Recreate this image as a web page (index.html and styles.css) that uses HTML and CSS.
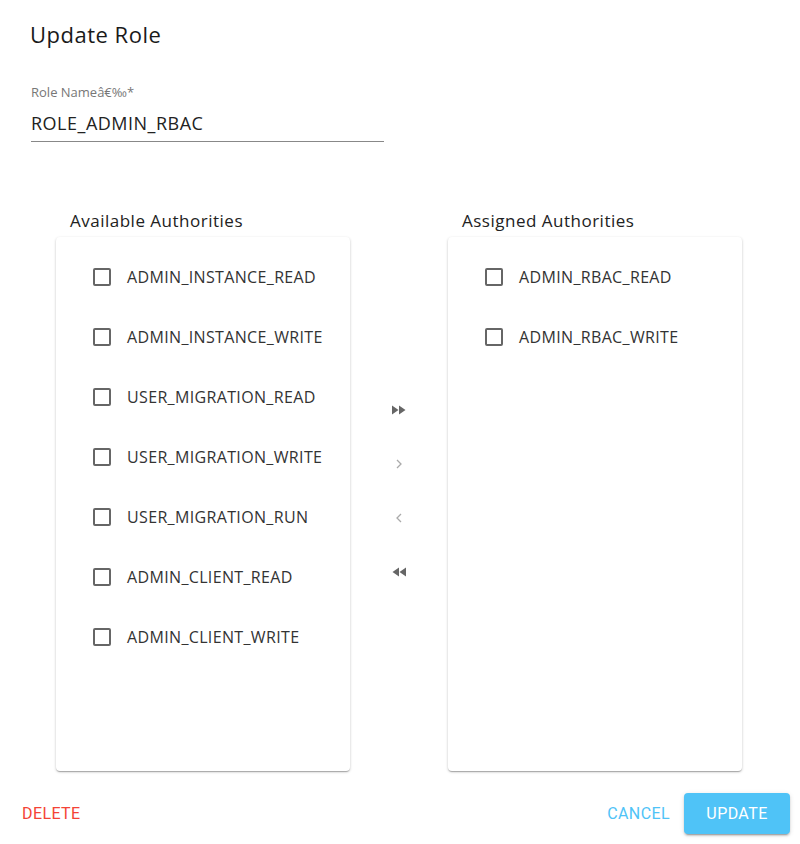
FILE: index.html
```html
<!DOCTYPE html>
<html>
<head>
<meta charset="utf-8">
<link rel="stylesheet" href="styles.css">
</head>
<body>
<div class="dialog">
  <h2 class="title">Update Role</h2>
  <div class="field">
    <label class="field-label">Role Nameâ€‰*</label>
    <div class="field-input">ROLE_ADMIN_RBAC</div>
  </div>
  <div class="transfer">
    <div class="column">
      <div class="col-title">Available Authorities</div>
      <div class="card">
        <div class="row"><span class="box"></span><span class="label">ADMIN_INSTANCE_READ</span></div>
        <div class="row"><span class="box"></span><span class="label">ADMIN_INSTANCE_WRITE</span></div>
        <div class="row"><span class="box"></span><span class="label">USER_MIGRATION_READ</span></div>
        <div class="row"><span class="box"></span><span class="label">USER_MIGRATION_WRITE</span></div>
        <div class="row"><span class="box"></span><span class="label">USER_MIGRATION_RUN</span></div>
        <div class="row"><span class="box"></span><span class="label">ADMIN_CLIENT_READ</span></div>
        <div class="row"><span class="box"></span><span class="label">ADMIN_CLIENT_WRITE</span></div>
      </div>
    </div>
    <div class="arrows">
      <button class="arrow dark"><svg width="16" height="12" viewBox="0 0 16 12"><path d="M1 1.5 L7.5 6 L1 10.5Z M8 1.5 L14.5 6 L8 10.5Z" fill="#666"/></svg></button>
      <button class="arrow"><svg width="10" height="12" viewBox="0 0 10 12"><path d="M3 2 L7 6 L3 10" fill="none" stroke="#aaa" stroke-width="1.3"/></svg></button>
      <button class="arrow"><svg width="10" height="12" viewBox="0 0 10 12"><path d="M7 2 L3 6 L7 10" fill="none" stroke="#aaa" stroke-width="1.3"/></svg></button>
      <button class="arrow dark"><svg width="16" height="12" viewBox="0 0 16 12"><path d="M15 1.5 L8.5 6 L15 10.5Z M8 1.5 L1.5 6 L8 10.5Z" fill="#666"/></svg></button>
    </div>
    <div class="column">
      <div class="col-title">Assigned Authorities</div>
      <div class="card">
        <div class="row"><span class="box"></span><span class="label">ADMIN_RBAC_READ</span></div>
        <div class="row"><span class="box"></span><span class="label">ADMIN_RBAC_WRITE</span></div>
      </div>
    </div>
  </div>
  <div class="actions">
    <button class="btn delete">DELETE</button>
    <div class="right">
      <button class="btn cancel">CANCEL</button>
      <button class="btn update">UPDATE</button>
    </div>
  </div>
</div>
</body>
</html>
```
FILE: styles.css
```css
* { box-sizing: border-box; }
body {
  margin: 0;
  background: #fff;
  font-family: "Open Sans", "Liberation Sans", sans-serif;
  color: #222;
}
.dialog {
  width: 800px;
  height: 844px;
  padding: 20px 0 0 0;
}
.title {
  margin: 0 0 0 30px;
  font-size: 22px;
  font-weight: 500;
  line-height: 28px;
  letter-spacing: 0.5px;
  color: #1a1a1a;
}
.field {
  margin: 36px 0 0 31px;
  width: 353px;
}
.field-label {
  display: block;
  font-size: 13px;
  color: #777;
  line-height: 16px;
}
.field-input {
  font-size: 18px;
  line-height: 24px;
  padding: 11px 0 6px 0;
  border-bottom: 1px solid #888;
  color: #222;
  letter-spacing: 0.5px;
}
.transfer {
  display: flex;
  margin: 67px 0 0 56px;
}
.column { width: 294px; }
.col-title {
  font-size: 17px;
  line-height: 24px;
  margin-left: 14px;
  margin-bottom: 4px;
  color: #222;
  letter-spacing: 0.5px;
}
.card {
  height: 534px;
  border-radius: 4px;
  box-shadow: 0 1px 3px rgba(0,0,0,0.2), 0 1px 1px rgba(0,0,0,0.14), 0 2px 1px -1px rgba(0,0,0,0.12);
  padding-top: 10px;
  background: #fff;
}
.row {
  display: flex;
  align-items: center;
  height: 60px;
  padding-left: 37px;
}
.box {
  width: 18px;
  height: 18px;
  border: 2px solid #666;
  border-radius: 2px;
  flex: none;
}
.label {
  margin-left: 16px;
  font-size: 16px;
  color: #333;
  letter-spacing: 0.35px;
}
.arrows {
  width: 98px;
  display: flex;
  flex-direction: column;
  align-items: center;
  padding-top: 189px;
  gap: 30px;
}
.arrow {
  width: 24px;
  height: 24px;
  border: 0;
  background: none;
  padding: 0;
  display: flex;
  align-items: center;
  justify-content: center;
}
.actions {
  display: flex;
  justify-content: space-between;
  align-items: center;
  margin-top: 22px;
  padding: 0 10px 0 10px;
}
.right { display: flex; align-items: center; gap: 2px; }
.btn {
  font-family: Roboto, "Liberation Sans", sans-serif;
  font-size: 16px;
  border: 0;
  background: none;
  padding: 0 12px;
  height: 41px;
  letter-spacing: 0.4px;
}
.delete { color: #f44336; }
.cancel { color: #4fc3f7; }
.update {
  background: #4fc3f7;
  color: #fff;
  width: 106px;
  border-radius: 4px;
  box-shadow: 0 3px 1px -2px rgba(0,0,0,0.2), 0 2px 2px rgba(0,0,0,0.14), 0 1px 5px rgba(0,0,0,0.12);
}
```
